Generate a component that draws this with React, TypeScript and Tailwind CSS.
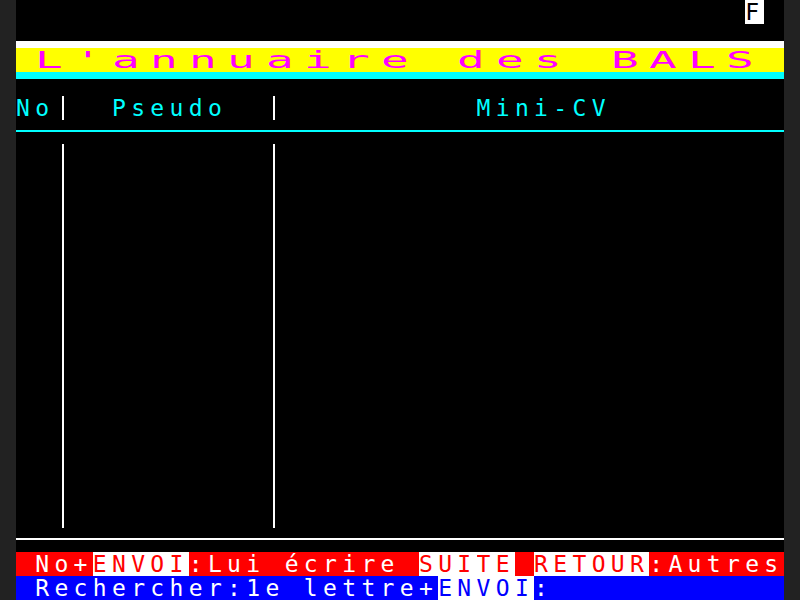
import React from 'react';

// one Minitel character cell = 19.2 x 24 px (40 x 25 grid on 768 x 600)
function Txt({ text, className = '' }: { text: string; className?: string }) {
  return (
    <span className={`flex ${className}`}>
      {[...text].map((ch, i) => (
        <span key={i} className="block w-[19.2px] h-6 leading-6 overflow-hidden">
          {ch === ' ' ? '\u00a0' : ch}
        </span>
      ))}
    </span>
  );
}

// double-width characters for the title
function Wide({ text, className = '' }: { text: string; className?: string }) {
  return (
    <span className={`flex ${className}`}>
      {[...text].map((ch, i) => (
        <span key={i} className="block w-[38.4px] h-6 leading-6 overflow-hidden">
          <span className="inline-block origin-left scale-x-200">{ch === ' ' ? '\u00a0' : ch}</span>
        </span>
      ))}
    </span>
  );
}

function Bar({ offset }: { offset: string }) {
  return (
    <div className="w-[19.2px] h-full">
      <div className={`${offset} w-[2px] h-full bg-white`}></div>
    </div>
  );
}

export default function App() {
  return (
    <div className="w-[800px] h-[600px] bg-[#222222] overflow-hidden">
      <div className="w-[768px] h-[600px] mx-auto bg-black flex flex-col font-['DejaVu_Sans_Mono',monospace] text-[23px]">
        {/* row 0: status */}
        <div className="flex h-6">
          <Txt text={' '.repeat(38)} />
          <Txt text="F" className="bg-white text-black" />
          <Txt text=" " />
        </div>

        {/* row 1: white band */}
        <div className="flex flex-col h-6">
          <div className="h-[17px]"></div>
          <div className="h-[7px] bg-white"></div>
        </div>

        {/* row 2: title */}
        <div className="flex h-6 bg-[#ffff00] text-[#ff00ff]">
          <Txt text=" " />
          <Wide text="L'annuaire des BALS" />
          <Txt text=" " />
        </div>

        {/* row 3: cyan band */}
        <div className="flex flex-col h-6">
          <div className="h-[7px] bg-[#00ffff]"></div>
        </div>

        {/* row 4: column headers */}
        <div className="flex h-6 text-[#00ffff]">
          <Txt text="No" />
          <Bar offset="ml-[7.6px]" />
          <Txt text="  Pseudo  " />
          <Bar offset="ml-[7.4px]" />
          <Txt text="          Mini-CV" />
        </div>

        {/* row 5: separator */}
        <div className="flex flex-col h-6 pt-[10px]">
          <div className="h-[2px] bg-[#00ffff]"></div>
        </div>

        {/* rows 6-21: list body */}
        <div className="flex h-[384px]">
          <div className="w-[38.4px]"></div>
          <Bar offset="ml-[7.6px]" />
          <div className="w-[192px]"></div>
          <Bar offset="ml-[7.4px]" />
        </div>

        {/* row 22: separator */}
        <div className="flex flex-col h-6 pt-[10px]">
          <div className="h-[2px] bg-white"></div>
        </div>

        {/* row 23: commands */}
        <div className="flex h-6 bg-[#ff0000] text-white">
          <Txt text=" No+" />
          <Txt text="ENVOI" className="bg-white text-[#ff0000]" />
          <Txt text=":Lui écrire " />
          <Txt text="SUITE" className="bg-white text-[#ff0000]" />
          <Txt text=" " />
          <Txt text="RETOUR" className="bg-white text-[#ff0000]" />
          <Txt text=":Autres" />
        </div>

        {/* row 24: search */}
        <div className="flex h-6 bg-[#0000ff] text-white">
          <Txt text=" Rechercher:1e lettre+" />
          <Txt text="ENVOI" className="bg-white text-[#0000ff]" />
          <Txt text=":" />
        </div>
      </div>
    </div>
  );
}
